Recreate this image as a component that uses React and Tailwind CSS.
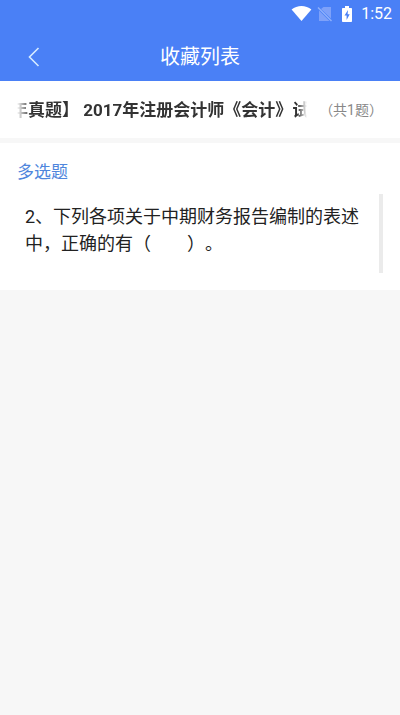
import React from 'react';

const question = {
  id: 2,
  text: '下列各项关于中期财务报告编制的表述中，正确的有（　　）。',
};

const StatusBar = () => (
  <div className="flex h-7 items-center justify-end pr-2 text-white">
    {/* Wifi */}
    <svg className="mr-1" width="22" height="16" viewBox="0 0 22 16" fill="currentColor" aria-hidden="true">
      <path d="M10.500 15 .6 3.600C3.400 1.300 6.800 0 10.500 0s7.100 1.300 9.900 3.600z" />
    </svg>
    {/* No sim */}
    <svg className="mr-2" width="16" height="16" viewBox="0 0 16 16" aria-hidden="true">
      <path d="M4 3 6.500 1H14v11.500zM2 4.500 12.500 15H2z" fill="#7ea1f9" />
      <path d="M1 1.500 14.500 15" stroke="#8fb0fb" strokeWidth="1.400" />
    </svg>
    {/* Battery */}
    <svg className="mr-2" width="12" height="18" viewBox="0 0 12 18" aria-hidden="true">
      <path d="M4 1h4v2h2.200c.5 0 .8.300.8.800v12.400c0 .5-.3.800-.8.800H1.800c-.5 0-.8-.3-.8-.8V3.800c0-.5.300-.8.800-.8H4z" fill="currentColor" />
      <path d="M7 5 3.500 10.500h2.100V15L8.700 9.300H6.600z" fill="#4a80f6" />
    </svg>
    <span className="text-base leading-7">1:52</span>
  </div>
);

const NavBar = () => (
  <header className="grid h-[53px] grid-cols-[68px_1fr_68px] items-center pt-1 text-white">
    <button type="button" aria-label="返回" className="flex h-full items-center justify-center">
      <svg width="12" height="20" viewBox="0 0 12 20" fill="none" stroke="#d6ebff" strokeWidth="1.600" aria-hidden="true">
        <path d="M10.500 1 1.500 10l9 9" />
      </svg>
    </button>
    <h1 className="text-center text-xl">收藏列表</h1>
  </header>
);

const App = () => {
  return (
    <div
      lang="zh-CN"
      className="min-h-screen bg-[#f7f7f7] font-['Roboto','Noto_Sans_CJK_SC',sans-serif] [text-spacing-trim:space-all]"
    >
      <div className="bg-[#4a80f6]">
        <StatusBar />
        <NavBar />
      </div>

      <main>
        <div className="flex h-[57px] items-center bg-white px-[17px]">
          <div className="min-w-0 flex-1 overflow-hidden [mask-image:linear-gradient(to_right,transparent,black_14px,black_calc(100%-10px),transparent)]">
            <h2 className="-ml-1.5 text-[17px] leading-6 font-bold whitespace-nowrap text-[#333333]">
              年真题】 2017年注册会计师《会计》试
            </h2>
          </div>
          <span className="ml-3 shrink-0 text-sm text-[#888888]">（共1题）</span>
        </div>

        <section className="mt-[5px] bg-white py-[17px]">
          <h3 className="px-[17px] text-[17px] leading-6 text-[#4f86dc]">多选题</h3>
          <div className="mt-[10px] mr-[17px] ml-[25px] h-[79px] border-r-4 border-[#ebebeb] pt-[9px]">
            <a href="#question" className="block text-lg leading-[27px] text-[#222222]">
              {`${question.id}、${question.text}`}
            </a>
          </div>
        </section>
      </main>
    </div>
  );
};

export default App;
